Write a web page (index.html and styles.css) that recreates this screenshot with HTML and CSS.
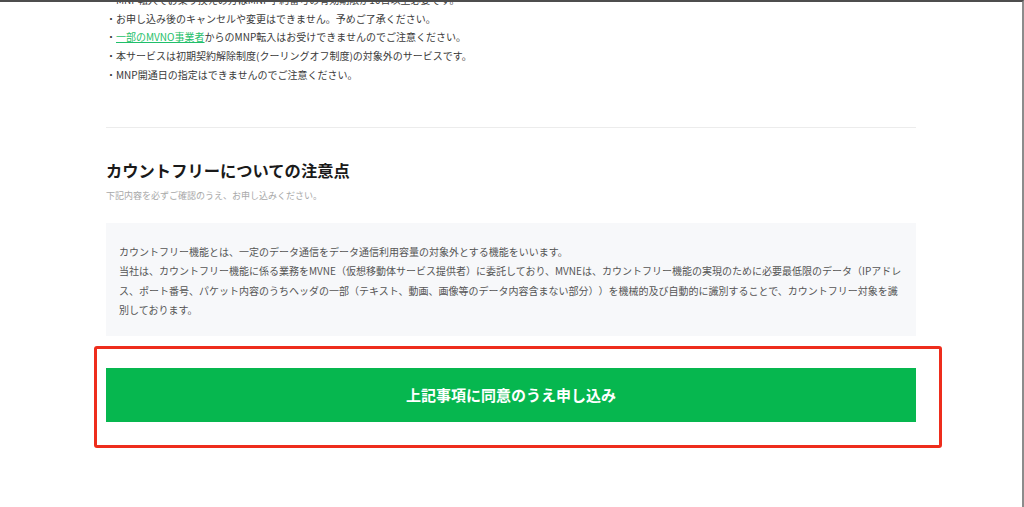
FILE: index.html
```html
<!DOCTYPE html>
<html lang="ja">
<head>
  <meta charset="UTF-8" />
  <meta name="viewport" content="width=device-width, initial-scale=1.0"/>
  <title>カウントフリーについての注意点</title>
  <link rel="stylesheet" href="styles.css">
</head>
<body>
  <div class="frame">
    <div class="container">
      <ul class="notes">
        <li>・MNP転入でお乗り換えの方はMNP予約番号の有効期限が10日以上必要です。</li>
        <li>・お申し込み後のキャンセルや変更はできません。予めご了承ください。</li>
        <li>・<a href="#">一部のMVNO事業者</a>からのMNP転入はお受けできませんのでご注意ください。</li>
        <li>・本サービスは初期契約解除制度(クーリングオフ制度)の対象外のサービスです。</li>
        <li>・MNP開通日の指定はできませんのでご注意ください。</li>
      </ul>

      <hr class="divider">

      <h2>カウントフリーについての注意点</h2>
      <p class="lead">下記内容を必ずご確認のうえ、お申し込みください。</p>

      <div class="info">
        <p>カウントフリー機能とは、一定のデータ通信をデータ通信利用容量の対象外とする機能をいいます。</p>
        <p>当社は、カウントフリー機能に係る業務をMVNE（仮想移動体サービス提供者）に委託しており、MVNEは、カウントフリー機能の実現のために必要最低限のデータ（IPアドレス、ポート番号、パケット内容のうちヘッダの一部（テキスト、動画、画像等のデータ内容含まない部分））を機械的及び自動的に識別することで、カウントフリー対象を識別しております。</p>
      </div>

      <div class="highlight">
        <button class="submit">上記事項に同意のうえ申し込み</button>
      </div>
    </div>
  </div>
</body>
</html>
```

FILE: styles.css
```css
html, body {
  margin: 0;
  padding: 0;
  background: #ffffff;
}
body {
  font-family: "Noto Sans CJK JP", "Noto Sans", sans-serif;
  color: #333;
  text-spacing-trim: space-all;
}
.frame {
  height: 100vh;
  box-sizing: border-box;
  border-top: 2px solid #4d4d4d;
  border-right: 2px solid #8c8c8c;
  overflow: hidden;
}
.container {
  width: 810px;
  margin: 0 auto;
}
.notes {
  list-style: none;
  margin: -11px 0 0;
  padding: 0;
  font-size: 10px;
  line-height: 18.7px;
  color: #3a3a3a;
}
.notes a {
  color: #1fbf6a;
  text-decoration: underline;
}
.divider {
  border: none;
  border-top: 1px solid #ececec;
  margin: 42px 0 0;
}
h2 {
  margin: 30px 0 0;
  font-size: 16.3px;
  line-height: 24px;
  font-weight: bold;
  color: #1a1a1a;
}
.lead {
  margin: 7px 0 0;
  font-size: 9px;
  line-height: 14px;
  color: #a8a8a8;
}
.info {
  margin-top: 20px;
  background: #f7f8fa;
  padding: 19px 14px 16px 13px;
  font-size: 10px;
  line-height: 19.5px;
  color: #555;
}
.info p {
  margin: 0;
}
.highlight {
  margin: 10px 0 0 -12px;
  width: 816px;
  border: 3px solid #ee2d1c;
  border-radius: 3px;
  padding: 19px 17px 23px 9px;
}
.submit {
  display: block;
  width: 810px;
  height: 54px;
  border: none;
  background: #06b74f;
  color: #ffffff;
  font-family: inherit;
  font-size: 15px;
  font-weight: bold;
  cursor: pointer;
}
```
